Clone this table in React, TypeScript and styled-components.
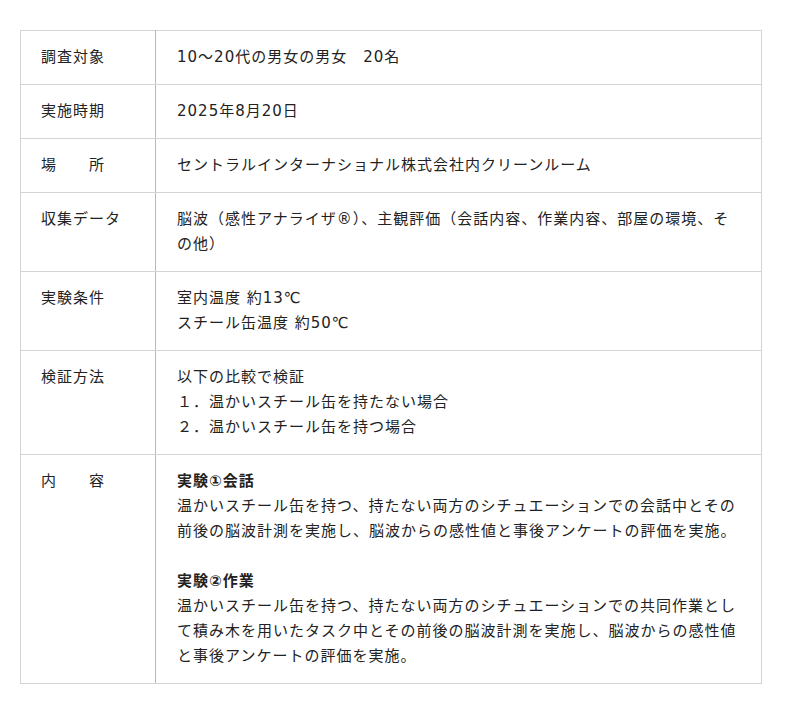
import React from 'react';
import styled, { createGlobalStyle } from 'styled-components';

const GlobalStyle = createGlobalStyle`
  body {
    margin: 0;
    background: #ffffff;
    font-family: "DejaVu Sans", "Noto Sans CJK JP", sans-serif;
    color: #222222;
  }
`;

const Page = styled.main`
  padding: 30px 20px;
`;

const Table = styled.table`
  width: 742px;
  border-collapse: collapse;
  table-layout: fixed;
  font-size: 15px;
  line-height: 25px;
  letter-spacing: 1px;
`;

const LabelCell = styled.th`
  width: 135px;
  box-sizing: border-box;
  padding: 14px 20px;
  text-align: left;
  vertical-align: top;
  font-weight: 400;
  border: 1px solid #d4d4d4;
  border-right-color: #b8b8b8;
`;

const ValueCell = styled.td`
  padding: 14px 20px 14px 21px;
  vertical-align: top;
  border: 1px solid #d4d4d4;
`;

const Heading = styled.div`
  font-weight: 700;
`;

const Paragraph = styled.div``;

const Spacer = styled.div`
  height: 25px;
`;

interface Row {
  label: string;
  content: React.ReactNode;
}

const rows: Row[] = [
  { label: '調査対象', content: '10〜20代の男女の男女　20名' },
  { label: '実施時期', content: '2025年8月20日' },
  { label: '場　　所', content: 'セントラルインターナショナル株式会社内クリーンルーム' },
  {
    label: '収集データ',
    content: '脳波（感性アナライザ®）、主観評価（会話内容、作業内容、部屋の環境、その他）',
  },
  {
    label: '実験条件',
    content: (
      <>
        室内温度 約13℃
        <br />
        スチール缶温度 約50℃
      </>
    ),
  },
  {
    label: '検証方法',
    content: (
      <>
        以下の比較で検証
        <br />
        １．温かいスチール缶を持たない場合
        <br />
        ２．温かいスチール缶を持つ場合
      </>
    ),
  },
  {
    label: '内　　容',
    content: (
      <>
        <Heading>実験①会話</Heading>
        <Paragraph>
          温かいスチール缶を持つ、持たない両方のシチュエーションでの会話中とその前後の脳波計測を実施し、脳波からの感性値と事後アンケートの評価を実施。
        </Paragraph>
        <Spacer />
        <Heading>実験②作業</Heading>
        <Paragraph>
          温かいスチール缶を持つ、持たない両方のシチュエーションでの共同作業として積み木を用いたタスク中とその前後の脳波計測を実施し、脳波からの感性値と事後アンケートの評価を実施。
        </Paragraph>
      </>
    ),
  },
];

export default function App() {
  return (
    <>
      <GlobalStyle />
      <Page>
        <Table>
          <tbody>
            {rows.map((row) => (
              <tr key={row.label}>
                <LabelCell>{row.label}</LabelCell>
                <ValueCell>{row.content}</ValueCell>
              </tr>
            ))}
          </tbody>
        </Table>
      </Page>
    </>
  );
}
